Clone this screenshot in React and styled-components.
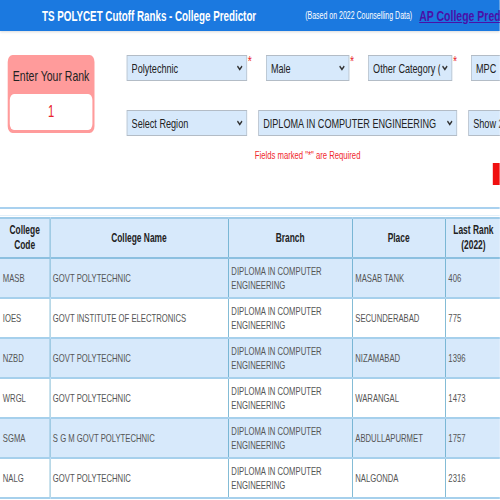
import React from 'react';
import styled, { createGlobalStyle } from 'styled-components';

// the source page is rendered squeezed horizontally, so the whole sheet is laid out
// at full width and then compressed on the x axis
const SQUEEZE = 0.7;

const GlobalStyle = createGlobalStyle`
  body {
    margin: 0;
    background: #fff;
    font-family: "Liberation Sans", Arial, sans-serif;
    overflow: hidden;
  }
`;

const rows = [
  { code: 'MASB', name: 'GOVT POLYTECHNIC', place: 'MASAB TANK', rank: '406' },
  { code: 'IOES', name: 'GOVT INSTITUTE OF ELECTRONICS', place: 'SECUNDERABAD', rank: '775' },
  { code: 'NZBD', name: 'GOVT POLYTECHNIC', place: 'NIZAMABAD', rank: '1396' },
  { code: 'WRGL', name: 'GOVT POLYTECHNIC', place: 'WARANGAL', rank: '1473' },
  { code: 'SGMA', name: 'S G M GOVT POLYTECHNIC', place: 'ABDULLAPURMET', rank: '1757' },
  { code: 'NALG', name: 'GOVT POLYTECHNIC', place: 'NALGONDA', rank: '2316' },
];

const Page = styled.div`
  width: ${500 / SQUEEZE}px;
  height: 500px;
  overflow: hidden;
  transform: scaleX(${SQUEEZE});
  transform-origin: 0 0;
`;

const Header = styled.div`
  height: 31px;
  background: #1b79e0;
  display: flex;
  align-items: center;
  padding-left: 60px;
  white-space: nowrap;
  box-shadow: 0 1px 3px rgba(0, 0, 0, 0.15);
`;

const Title = styled.span`
  color: #fff;
  font-weight: bold;
  font-size: 14px;
`;

const Note = styled.span`
  color: #fff;
  font-size: 10px;
  margin-left: 70px;
`;

const Link = styled.a`
  color: #4a10a8;
  font-weight: bold;
  font-size: 15px;
  text-decoration: underline;
  margin-left: 10px;
`;

const FormArea = styled.div`
  display: flex;
  height: 176px;
  padding: 24px 0 0 11px;
  box-sizing: border-box;
`;

const RankBox = styled.div`
  width: 124px;
  height: 78px;
  flex-shrink: 0;
  background: #ff9b9b;
  border-radius: 7px;
  padding: 2px 3px 3px;
  box-sizing: border-box;
  display: flex;
  flex-direction: column;
`;

const RankLabel = styled.div`
  height: 37px;
  display: flex;
  align-items: center;
  justify-content: center;
  font-size: 15px;
  color: #222;
  white-space: nowrap;
`;

const RankInput = styled.div`
  flex: 1;
  background: #fff;
  border-radius: 6px;
  display: flex;
  align-items: center;
  justify-content: center;
  color: #e8232b;
  font-size: 16px;
`;

const Fields = styled.div`
  margin-left: 46px;
  flex: 1;
  min-width: 0;
  display: flex;
  flex-direction: column;
`;

const SelectRow = styled.div`
  display: flex;
  margin-bottom: 29px;
  gap: ${(p) => p.$gap}px;
  white-space: nowrap;
`;

const Group = styled.div`
  display: flex;
  flex-shrink: 0;
`;

const Select = styled.div`
  width: ${(p) => p.$w}px;
  height: 26px;
  box-sizing: border-box;
  background: #d7e9fb;
  border: 1px solid #b3bcc6;
  display: flex;
  align-items: center;
  padding: 0 5px 0 6px;
  font-size: 13px;
  color: #222;
  overflow: hidden;
  flex-shrink: 0;
`;

const SelectText = styled.span`
  flex: 1;
  min-width: 0;
  overflow: hidden;
`;

const Star = styled.span`
  width: 26px;
  color: #e8232b;
  font-size: 15px;
  line-height: 12px;
  padding-left: 1px;
`;

const Bottom = styled.div`
  display: flex;
  align-items: flex-start;
  margin-top: -16px;
`;

const Required = styled.div`
  margin-left: 183px;
  color: #f0282d;
  font-size: 11px;
  line-height: 13px;
  white-space: nowrap;
`;

const RedButton = styled.div`
  width: 10px;
  height: 22px;
  background: #f01010;
  margin: 14px 0 0 auto;
  flex-shrink: 0;
`;

const Divider = styled.div`
  border-top: 2px solid #a9d1ef;
  border-bottom: 1px solid #e3f0fa;
  height: 6px;
  margin-bottom: 1px;
`;

const Table = styled.table`
  border-collapse: collapse;
  width: 716px;
  table-layout: fixed;
`;

const Th = styled.th`
  background: #d7e9fb;
  border-top: 2px solid #9fcbe8;
  border-bottom: 2px solid #8cc0e0;
  border-left: 1px solid #4f9fc4;
  height: 38px;
  padding: 0;
  font-size: 12px;
  font-weight: bold;
  color: #222;
  line-height: 15px;
  text-align: center;
  &:first-child {
    border-left: none;
  }
`;

const Row = styled.tr`
  background: ${(p) => (p.$alt ? '#fff' : '#d7e9fb')};
`;

const Td = styled.td`
  border-left: 1px solid #4f9fc4;
  border-bottom: 2px solid #a6d0ec;
  height: 38px;
  padding: 0 4px;
  font-size: 11px;
  line-height: 14px;
  color: #555;
  vertical-align: middle;
  white-space: nowrap;
  &:first-child {
    border-left: none;
  }
`;

const Chevron = () => (
  <svg width="9" height="6" viewBox="0 0 9 6" style={{ flexShrink: 0, marginLeft: 2 }}>
    <path d="M1.2 1.2 L4.5 4.5 L7.8 1.2" stroke="#333" strokeWidth="1.8" fill="none" />
  </svg>
);

const Field = ({ w, label, star, arrow = true }) => (
  <Group>
    <Select $w={w}>
      <SelectText>{label}</SelectText>
      {arrow && <Chevron />}
    </Select>
    {star && <Star>*</Star>}
  </Group>
);

const App = () => (
  <Page>
    <GlobalStyle />
    <Header>
      <Title>TS POLYCET Cutoff Ranks - College Predictor</Title>
      <Note>(Based on 2022 Counselling Data)</Note>
      <Link href="#">AP College Predictor</Link>
    </Header>
    <FormArea>
      <RankBox>
        <RankLabel>Enter Your Rank</RankLabel>
        <RankInput>1</RankInput>
      </RankBox>
      <Fields>
        <SelectRow $gap={0}>
          <Field w={172} label="Polytechnic" star />
          <Field w={119} label="Male" star />
          <Field w={120} label="Other Category (" star />
          <Field w={90} label="MPC" arrow={false} />
        </SelectRow>
        <SelectRow $gap={16}>
          <Field w={172} label="Select Region" />
          <Field w={284} label="DIPLOMA IN COMPUTER ENGINEERING" />
          <Field w={90} label="Show 20" arrow={false} />
        </SelectRow>
        <Bottom>
          <Required>Fields marked "*" are Required</Required>
          <RedButton />
        </Bottom>
      </Fields>
    </FormArea>
    <Divider />
    <Table>
      <colgroup>
        <col style={{ width: 71 }} />
        <col style={{ width: 255 }} />
        <col style={{ width: 177 }} />
        <col style={{ width: 133 }} />
        <col style={{ width: 80 }} />
      </colgroup>
      <thead>
        <tr>
          <Th>College<br />Code</Th>
          <Th>College Name</Th>
          <Th>Branch</Th>
          <Th>Place</Th>
          <Th>Last Rank<br />(2022)</Th>
        </tr>
      </thead>
      <tbody>
        {rows.map((r, i) => (
          <Row key={r.code} $alt={i % 2 === 1}>
            <Td>{r.code}</Td>
            <Td>{r.name}</Td>
            <Td>DIPLOMA IN COMPUTER<br />ENGINEERING</Td>
            <Td>{r.place}</Td>
            <Td>{r.rank}</Td>
          </Row>
        ))}
      </tbody>
    </Table>
  </Page>
);

export default App;
